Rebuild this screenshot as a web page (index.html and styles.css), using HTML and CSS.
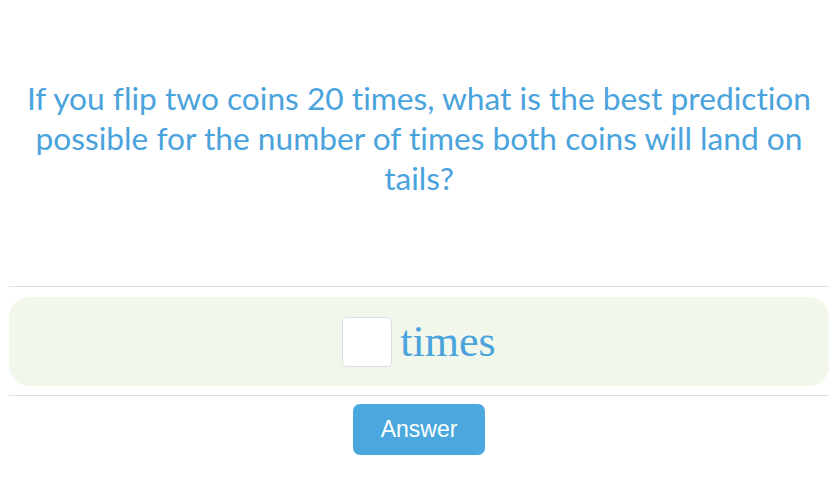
FILE: index.html
```html
<!DOCTYPE html>
<html lang="en">
<head>
<meta charset="utf-8">
<title>Coin flip prediction</title>
<link rel="stylesheet" href="styles.css">
</head>
<body>
<main class="page">
  <p class="question">If you flip two coins 20 times, what is the best prediction possible for the number of times both coins will land on tails?</p>
  <hr class="rule">
  <div class="answer-row">
    <input class="answer-input" type="text" aria-label="answer">
    <span class="unit">times</span>
  </div>
  <hr class="rule rule-bottom">
  <div class="actions">
    <button class="answer-btn" type="button">Answer</button>
  </div>
</main>
</body>
</html>
```

FILE: styles.css
```css
html, body {
  margin: 0;
  padding: 0;
  background: #ffffff;
}

.page {
  width: 820px;
  padding: 0 9px;
}

.question {
  margin: 78px 0 0;
  font-family: "Lato", "Open Sans", sans-serif;
  font-size: 31.7px;
  line-height: 40px;
  font-variant-ligatures: none;
  color: #4aa3dc;
  text-align: center;
}

.rule {
  margin: 88px 0 0;
  border: 0;
  border-top: 1px solid #dedde8;
  height: 0;
}

.rule-bottom {
  margin-top: 9px;
}

.answer-row {
  margin-top: 10px;
  height: 89px;
  border-radius: 20px;
  background: #f2f7ec;
  display: flex;
  align-items: center;
  justify-content: center;
  gap: 8px;
}

.answer-input {
  box-sizing: border-box;
  width: 50px;
  height: 50px;
  margin: 0;
  padding: 0;
  border: 1px solid #dddde3;
  border-radius: 5px;
  background: #ffffff;
  outline: none;
}

.unit {
  font-family: "Liberation Serif", "Times New Roman", serif;
  font-size: 44px;
  line-height: 50px;
  color: #4aa3dc;
}

.actions {
  display: flex;
  justify-content: center;
  margin-top: 8px;
}

.answer-btn {
  width: 132px;
  height: 51px;
  border: 0;
  border-radius: 7px;
  background: #4aa8de;
  color: #ffffff;
  font-family: "Liberation Sans", Arial, sans-serif;
  font-size: 23px;
  padding: 0;
  cursor: pointer;
}
```
